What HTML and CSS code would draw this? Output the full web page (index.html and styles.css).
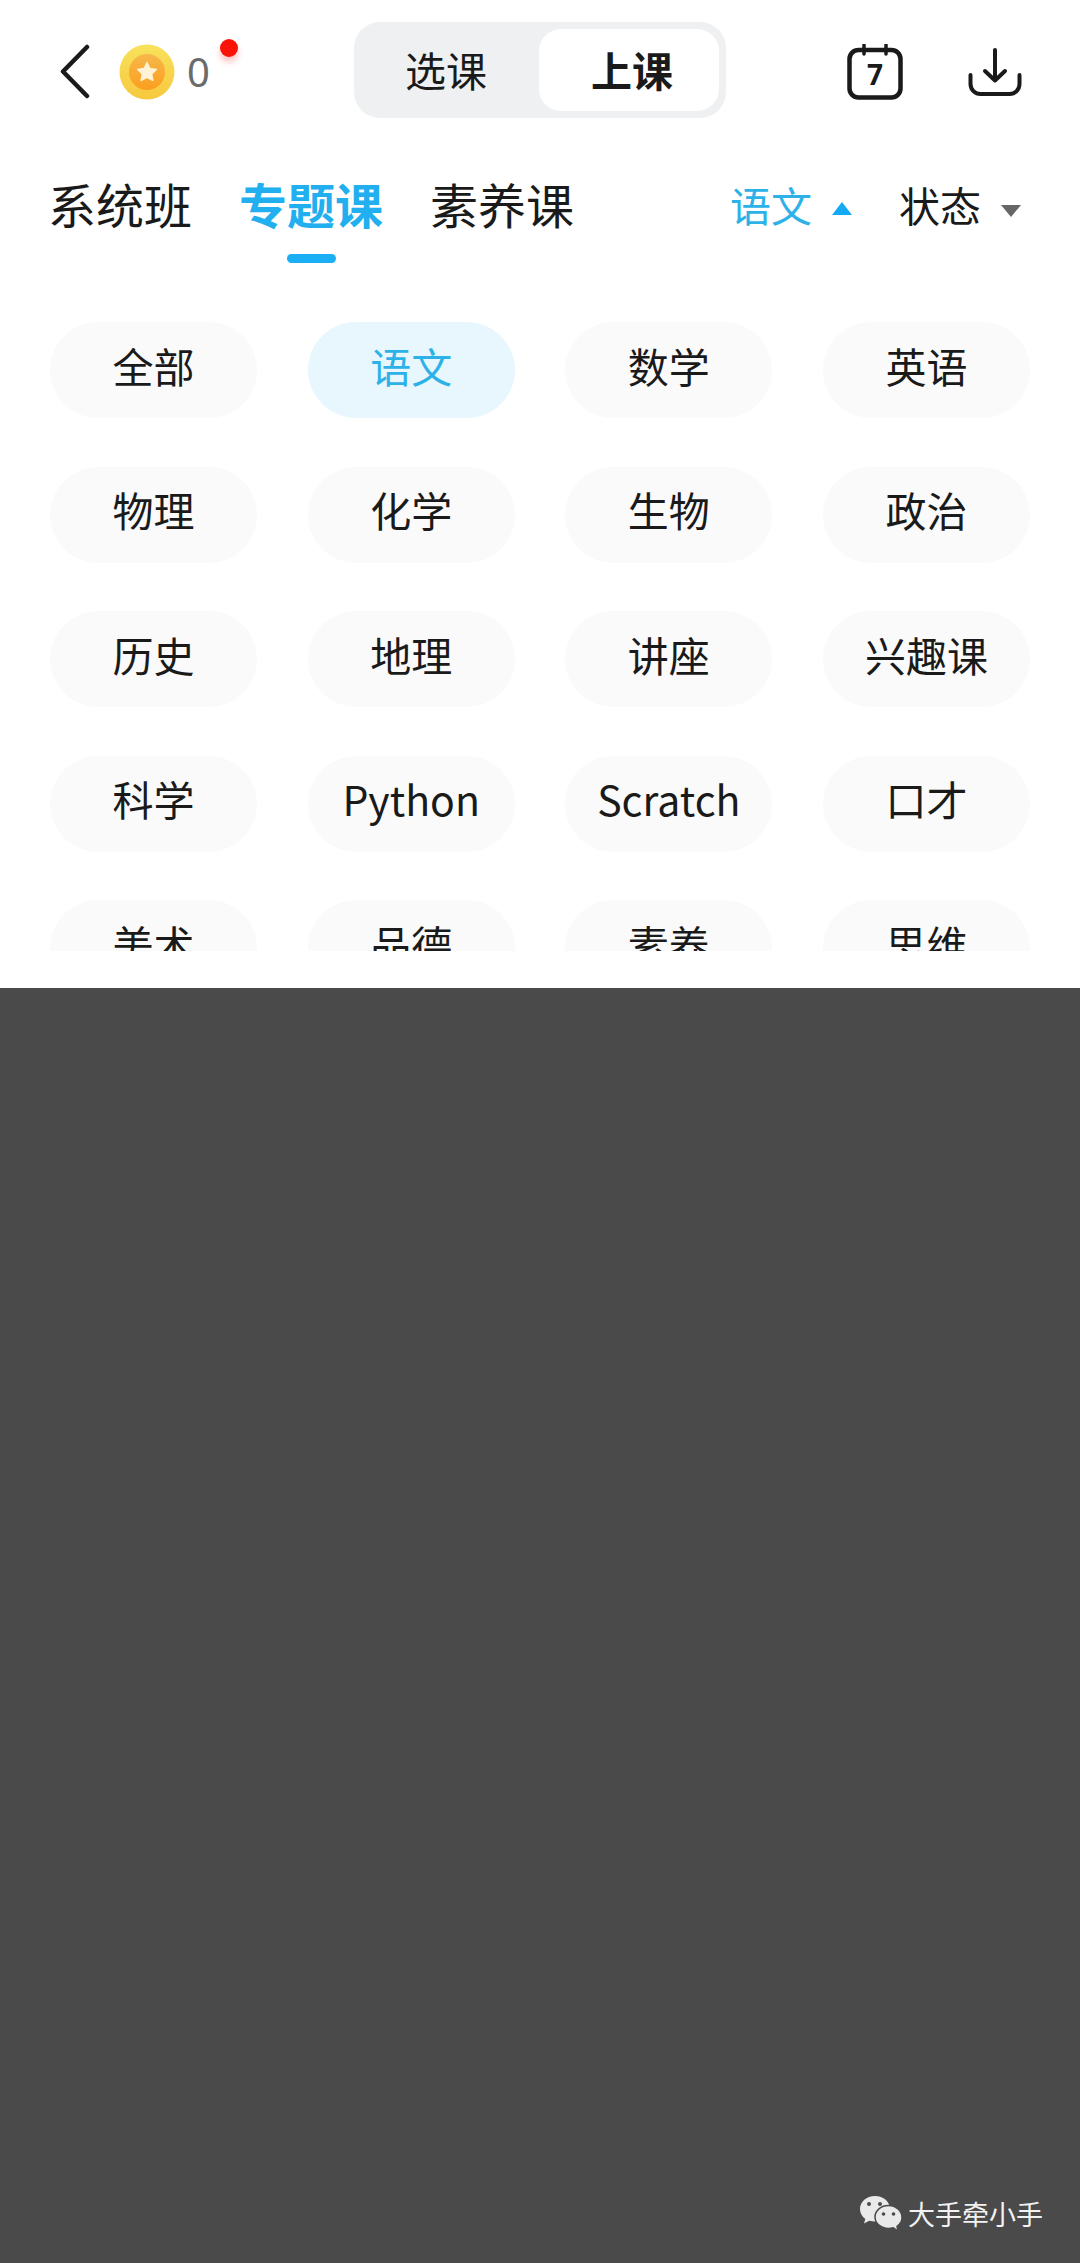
FILE: index.html
```html
<!DOCTYPE html>
<html lang="zh-CN">
<head>
<meta charset="utf-8">
<title>上课</title>
<link rel="stylesheet" href="styles.css">
</head>
<body>
<main class="panel">
  <header class="topbar">
    <div class="left">
      <svg class="back" viewBox="0 0 30 56" width="30" height="56"><path d="M27 3 3 27.500 27 52" fill="none" stroke="#1a1a1a" stroke-width="4.500" stroke-linecap="round" stroke-linejoin="round"/></svg>
      <svg class="coin" viewBox="0 0 56 56" width="56" height="56">
        <defs>
          <linearGradient id="rim" x1="0" y1="0" x2="0" y2="1"><stop offset="0" stop-color="#f8e25c"/><stop offset="1" stop-color="#f7c83e"/></linearGradient>
          <linearGradient id="core" x1="0" y1="0" x2="0" y2="1"><stop offset="0" stop-color="#f7b84a"/><stop offset="1" stop-color="#fb9f1f"/></linearGradient>
        </defs>
        <circle cx="28" cy="28" r="27.500" fill="url(#rim)"/>
        <circle cx="28" cy="28" r="18" fill="url(#core)"/>
        <path d="M28 18.500l2.800 6 6.500.9-4.700 4.500 1.200 6.500-5.800-3.100-5.800 3.100 1.200-6.500-4.700-4.500 6.500-.9z" fill="#fff3d6" stroke="#fff3d6" stroke-width="1.500" stroke-linejoin="round"/>
      </svg>
      <div class="count">0<span class="dot"></span></div>
    </div>
    <div class="toggle">
      <span class="seg seg-off">选课</span>
      <span class="seg seg-on">上课</span>
    </div>
    <div class="actions">
      <div class="cal">
        <svg viewBox="0 0 56 56" width="56" height="56"><rect x="2.500" y="6" width="51" height="47.500" rx="9" fill="none" stroke="#1a1a1a" stroke-width="4.500"/><path d="M17 1v9M39 1v9" stroke="#1a1a1a" stroke-width="3.500" stroke-linecap="round"/></svg>
        <span class="cal-num">7</span>
      </div>
      <svg class="dl" viewBox="0 0 54 48" width="54" height="48"><path d="M27 2v30M17 23l10 9.500L37 23" fill="none" stroke="#1a1a1a" stroke-width="4" stroke-linecap="round" stroke-linejoin="round"/><path d="M2.500 27v9a10 10 0 0 0 10 10h29a10 10 0 0 0 10-10v-9" fill="none" stroke="#1a1a1a" stroke-width="4" stroke-linecap="round"/></svg>
    </div>
  </header>

  <nav class="tabs">
    <a class="tab">系统班</a>
    <a class="tab tab-on">专题课</a>
    <a class="tab">素养课</a>
    <div class="filters">
      <span class="filter filter-on">语文<i class="tri tri-up"></i></span>
      <span class="filter">状态<i class="tri tri-down"></i></span>
    </div>
  </nav>

  <section class="chips">
    <span class="chip">全部</span><span class="chip chip-on">语文</span><span class="chip">数学</span><span class="chip">英语</span>
    <span class="chip">物理</span><span class="chip">化学</span><span class="chip">生物</span><span class="chip">政治</span>
    <span class="chip">历史</span><span class="chip">地理</span><span class="chip">讲座</span><span class="chip">兴趣课</span>
    <span class="chip">科学</span><span class="chip">Python</span><span class="chip">Scratch</span><span class="chip">口才</span>
    <span class="chip">美术</span><span class="chip">品德</span><span class="chip">素养</span><span class="chip">思维</span>
  </section>
</main>
<footer class="overlay">
  <div class="mark">
    <svg viewBox="0 0 44 38" width="44" height="38">
      <path d="M16 1C7.500 1 1 6.800 1 14c0 4 2 7.500 5.300 9.900L5 28.500l5.300-2.700c1.800.5 3.700.8 5.700.8 8.500 0 15-5.800 15-12.600C31 6.800 24.500 1 16 1z" fill="#e9e9e9"/>
      <path d="M29.500 10.500C22 10.500 16 15.500 16 22s6 11.500 13.500 11.500c1.700 0 3.300-.3 4.800-.7l4.700 3.200-1-4.600c3-2.200 5-5.400 5-8.900 0-6.500-6-12-13.500-12z" fill="#e9e9e9" stroke="#4a4a4a" stroke-width="1.500"/>
      <circle cx="10" cy="9" r="2" fill="#4a4a4a"/><circle cx="21" cy="9" r="2" fill="#4a4a4a"/>
      <circle cx="24.500" cy="19" r="1.800" fill="#4a4a4a"/><circle cx="34.500" cy="19" r="1.800" fill="#4a4a4a"/>
    </svg>
    <span class="mark-text">大手牵小手</span>
  </div>
</footer>
</body>
</html>
```
FILE: styles.css
```css
* { box-sizing: border-box; }
html, body { margin: 0; padding: 0; }
body {
  width: 1080px;
  height: 2263px;
  background: #4a4a4a;
  color: #1a1a1a;
  font-family: "Noto Sans CJK SC", "Noto Sans", sans-serif;
  display: flex;
  flex-direction: column;
  overflow: hidden;
}
.panel {
  height: 988px;
  background: #fff;
  flex: none;
}
.topbar {
  height: 118px;
  padding: 22px 58px 0 60px;
  display: flex;
  align-items: flex-start;
}
.left {
  width: 294px;
  display: flex;
  align-items: center;
  height: 100px;
}
.back { margin-right: 29px; flex: none; }
.coin { flex: none; margin-right: 12px; }
.count {
  position: relative;
  font-size: 40px;
  line-height: 56px;
  color: #6b6b6b;
  font-family: "Noto Sans", sans-serif;
}
.dot {
  position: absolute;
  left: 33px;
  top: -5px;
  width: 18px;
  height: 18px;
  border-radius: 50%;
  background: #fb1308;
  box-shadow: 0 5px 6px rgba(251, 60, 50, .3);
}
.toggle {
  width: 372px;
  height: 96px;
  padding: 7px;
  border-radius: 26px;
  background: #eef0f2;
  display: flex;
}
.seg {
  flex: 1;
  font-size: 41px;
  display: flex;
  align-items: center;
  justify-content: center;
  line-height: 1;
  padding-bottom: 1px;
}
.seg-off { padding-right: 8px; }
.seg-on {
  flex: none;
  width: 180px;
  padding-left: 6px;
  background: #fff;
  border-radius: 22px;
  font-weight: 700;
}
.actions {
  margin-left: auto;
  display: flex;
  align-items: center;
  gap: 65px;
  height: 100px;
}
.cal { position: relative; width: 56px; height: 56px; display: flex; align-items: center; justify-content: center; }
.cal svg { position: absolute; inset: 0; }
.cal-num { font-size: 28px; font-weight: 700; line-height: 1; padding-top: 4px; font-family: "Noto Sans", sans-serif; }
.tabs {
  height: 144px;
  padding: 0 50px 0 48px;
  display: flex;
  align-items: flex-start;
  gap: 47px;
}
.tab {
  position: relative;
  font-size: 48px;
  line-height: 64px;
  margin-top: 53px;
}
.tab-on {
  font-weight: 700;
  color: #22aff0;
}
.tab-on::after {
  content: "";
  position: absolute;
  left: 48px;
  bottom: -28px;
  width: 49px;
  height: 9px;
  border-radius: 5px;
  background: #1aaef5;
}
.filters {
  margin-left: auto;
  margin-top: 57px;
  display: flex;
  gap: 47px;
  padding-right: 9px;
}
.filter {
  font-size: 41px;
  line-height: 58px;
  display: flex;
  align-items: center;
  gap: 20px;
}
.filter-on { color: #2db2e8; }
.tri { width: 0; height: 0; border-left: 10px solid transparent; border-right: 10px solid transparent; display: block; }
.tri-up { border-bottom: 13px solid #14a9f5; margin-top: 8px; }
.tri-down { border-top: 12px solid #666; margin-top: 14px; }
.chips {
  height: 689px;
  padding: 60px 50px 0;
  display: grid;
  grid-template-columns: repeat(4, 207px);
  justify-content: space-between;
  grid-auto-rows: 96px;
  row-gap: 48.500px;
  overflow: hidden;
  align-content: start;
}
.chip {
  background: #fafafa;
  border-radius: 48px;
  font-size: 41px;
  line-height: 1;
  display: flex;
  align-items: center;
  justify-content: center;
  padding-bottom: 10px;
}
.chip-on { background: #e8f7fd; color: #2db2e8; }
.overlay {
  flex: 1;
  display: flex;
  align-items: flex-end;
  justify-content: flex-end;
  padding: 0 37px 30px 0;
}
.mark {
  display: flex;
  align-items: center;
  gap: 5px;
  color: #f2f2f2;
}
.mark-text { font-size: 27px; line-height: 38px; }
```
